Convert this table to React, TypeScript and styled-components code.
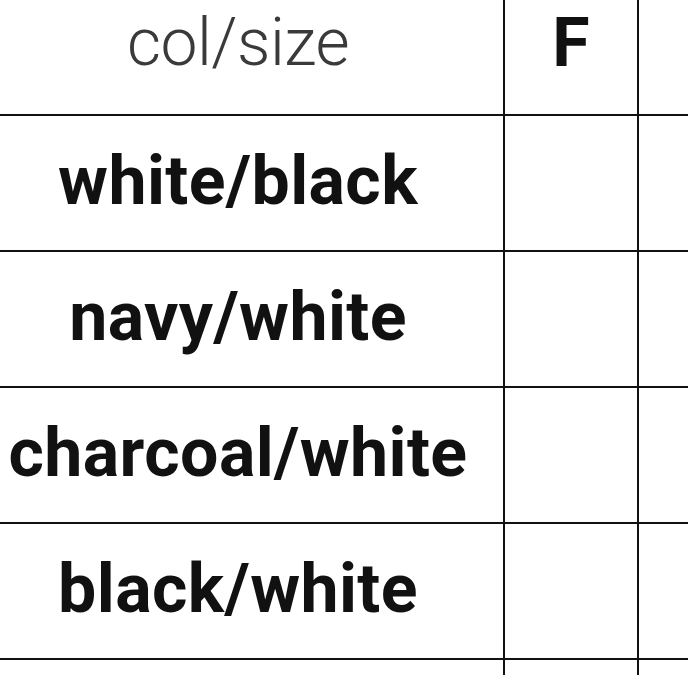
import * as React from 'react';
import styled, { createGlobalStyle } from 'styled-components';

const GlobalStyle = createGlobalStyle`
    html, body {
        margin: 0;
        padding: 0;
        background: #ffffff;
        overflow: hidden;
    }
`;

const Page = styled.div`
    width: 688px;
    height: 675px;
    overflow: hidden;
    background: #fff;
`;

const Table = styled.table`
    margin: -20px 0 0 -29px;
    border-collapse: collapse;
    table-layout: fixed;
    width: 800px;
    font-family: Roboto, "Liberation Sans", sans-serif;
    line-height: 1;
`;

const Head = styled.th<{ light?: boolean }>`
    height: 126px;
    padding: 0 0 8px;
    border: 2px solid #111;
    border-top: none;
    text-align: center;
    vertical-align: middle;
    font-size: ${({ light }) => (light ? '66px' : '68px')};
    font-weight: ${({ light }) => (light ? 300 : 700)};
    color: ${({ light }) => (light ? '#3a3a3a' : '#111')};
    letter-spacing: ${({ light }) => (light ? '-0.5px' : '0')};
`;

const Cell = styled.td`
    height: 130px;
    padding: 0 0 4px;
    border: 2px solid #111;
    text-align: center;
    vertical-align: middle;
    font-size: 68px;
    font-weight: 700;
    letter-spacing: 0.4px;
    color: #111;
    white-space: nowrap;
`;

const colors = ['white/black', 'navy/white', 'charcoal/white', 'black/white', ''];

export default function App() {
    return (
        <Page>
            <GlobalStyle />
            <Table>
                <colgroup>
                    <col style={{ width: 532 }} />
                    <col style={{ width: 134 }} />
                    <col style={{ width: 134 }} />
                </colgroup>
                <thead>
                    <tr>
                        <Head light>col/size</Head>
                        <Head>F</Head>
                        <Head />
                    </tr>
                </thead>
                <tbody>
                    {colors.map((c, i) => (
                        <tr key={i}>
                            <Cell>{c}</Cell>
                            <Cell />
                            <Cell />
                        </tr>
                    ))}
                </tbody>
            </Table>
        </Page>
    );
}
